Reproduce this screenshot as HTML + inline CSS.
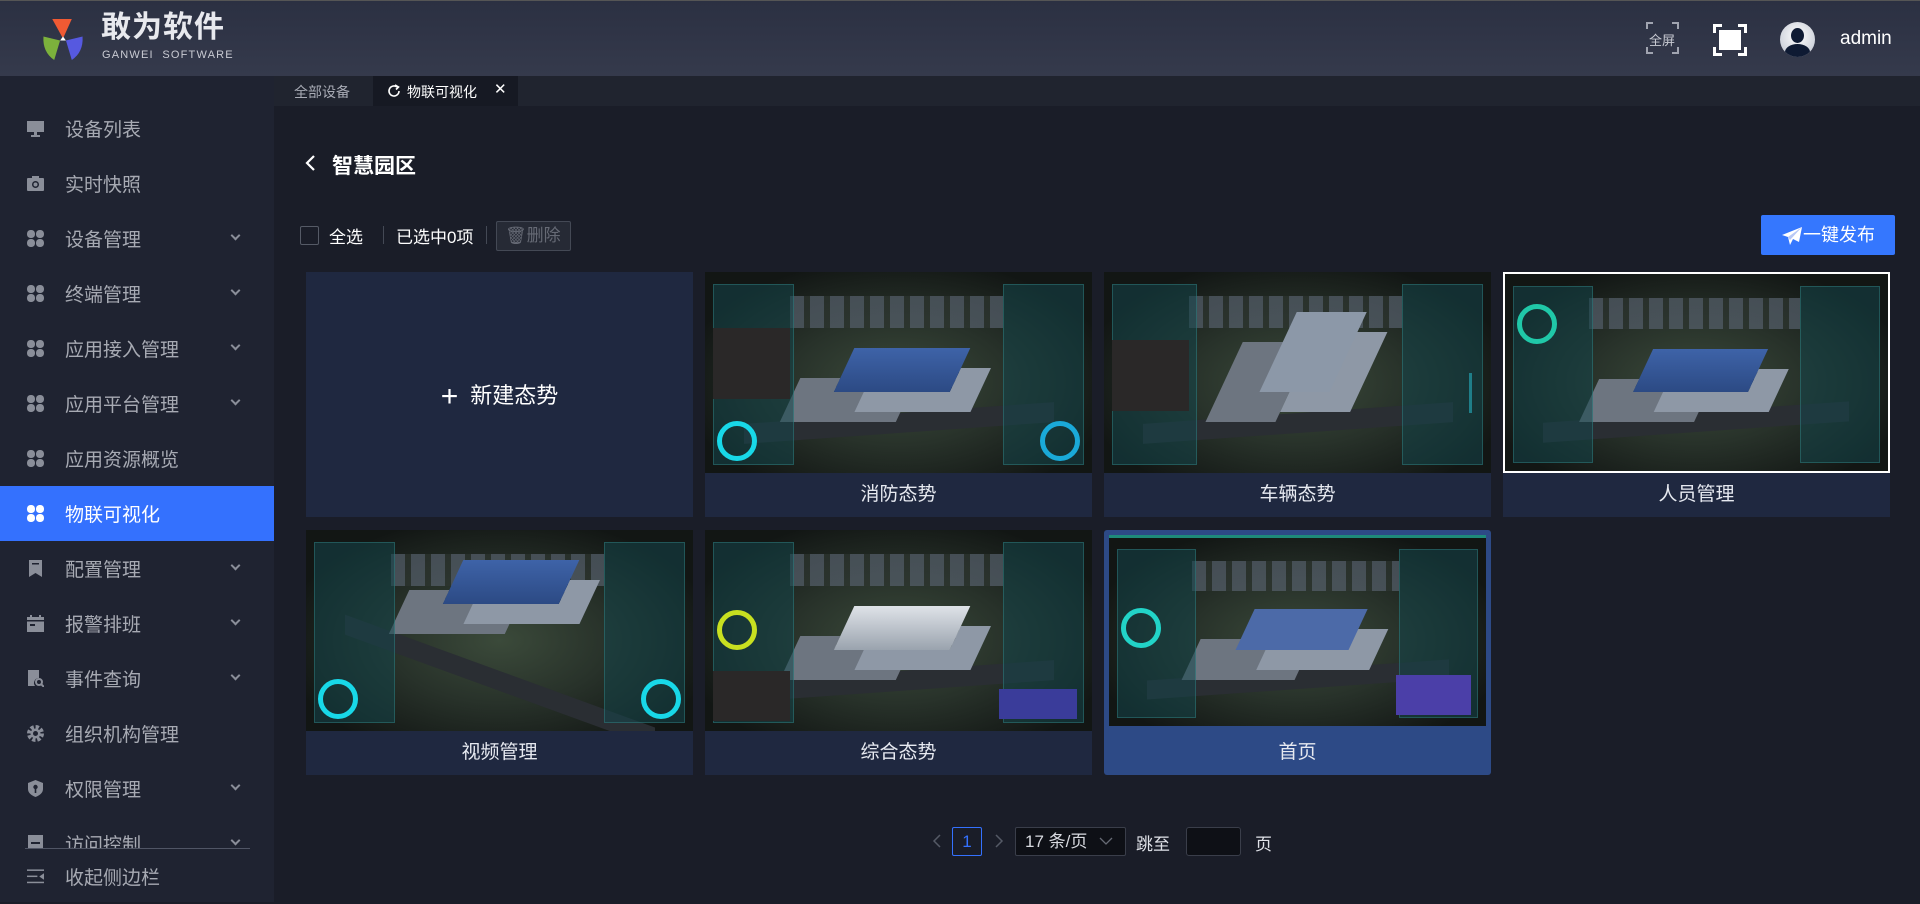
<!DOCTYPE html>
<html><head><meta charset="utf-8"><style>
*{margin:0;padding:0;box-sizing:border-box}
body{width:1920px;height:902px;overflow:hidden;background:#1a1d28;font-family:"Liberation Sans","Noto Sans CJK SC",sans-serif;position:relative;color:#fff}
.hdr{position:absolute;left:0;top:0;width:1920px;height:76px;background:linear-gradient(180deg,#2b3042,#353a4c);border-top:1px solid #555}
.side{position:absolute;left:0;top:76px;width:274px;height:826px;background:#1f2331}
.item{position:absolute;left:0;width:274px;height:55px;display:flex;align-items:center;font-size:19px;color:#a7aab3}
.item .ic{position:absolute;left:27px;width:17px;height:17px}
.item .tx{position:absolute;left:65px}
.item .ar{position:absolute;left:232px;width:7px;height:7px;border-right:2px solid #8a8e99;border-bottom:2px solid #8a8e99;transform:rotate(45deg);top:21px}
.item.act{background:#3471fe;color:#fff}
.clover{display:grid;grid-template-columns:8px 8px;gap:1px}
.clover i{width:8px;height:8px;border-radius:45%;background:#8a8e99;display:block}
.tabs{position:absolute;left:274px;top:76px;width:1646px;height:30px;background:#20242f}
.main{position:absolute;left:274px;top:106px;width:1646px;height:796px;background:#1a1d28}
.card{position:absolute;width:387px;height:245px;background:#1f2840}
.card .lb{position:absolute;left:0;right:0;bottom:0;height:44px;line-height:44px;text-align:center;font-size:19px;color:#e6e9f0}
.th{position:absolute;left:0;top:0;right:0;height:201px;overflow:hidden;background:
radial-gradient(ellipse at 50% 55%,#3b4a3a 0,#28322a 40%,#121614 80%);}
.th .bld{position:absolute;left:36%;top:38%;width:30%;height:22%;background:linear-gradient(#3e63a8,#2c4a84);transform:skewX(-25deg);box-shadow:30px 20px 0 #8e98a6,-40px 30px 0 #6d7580}
.th .bld2{position:absolute;left:22%;top:12%;width:55%;height:16%;background:repeating-linear-gradient(90deg,#56606c 0 14px,#2d3530 14px 20px);opacity:.7}
.th .road{position:absolute;left:10%;top:70%;width:80%;height:10%;background:#2a2e33;transform:skewY(-4deg)}
.th .pl,.th .pr{position:absolute;top:6%;bottom:4%;width:21%;background:rgba(20,70,75,.55);border:1px solid rgba(60,160,160,.35)}
.th .pl{left:2%}.th .pr{right:2%}
.th .ring{position:absolute;width:40px;height:40px;border-radius:50%;border:5px solid #18d8e8;bottom:12px}
.th .vid{position:absolute;left:2%;top:28%;width:20%;height:35%;background:#2a2828}
.tb{position:absolute;height:16px;background:rgba(40,200,220,.5)}
.cn{position:absolute;width:7px;height:7px;border-color:#a0a4b0;border-style:solid;border-width:0}
</style></head><body>
<div class="hdr">
 <svg style="position:absolute;left:40px;top:16px" width="46" height="44" viewBox="0 0 42 45">
  <path d="M10 2 L30 2 L21 22 Z" fill="#f05a33"/>
  <path d="M1 20 L18 24 L12 44 Q0 36 1 20Z" fill="#7cb13c"/>
  <path d="M41 20 L24 24 L30 44 Q42 36 41 20Z" fill="#5659e0"/>
  <path d="M18 24 L24 24 L21 20Z" fill="#fff"/>
 </svg>
 <div style="position:absolute;left:101px;top:8px;font-size:30px;line-height:38px;font-weight:bold;color:#e8e9ee;letter-spacing:1px">敢为软件</div>
 <div style="position:absolute;left:102px;top:48px;font-size:11px;line-height:13px;color:#c9cbd3;letter-spacing:1.2px">GANWEI&nbsp; SOFTWARE</div>
 <div class="cn" style="left:1646px;top:21px;border-left-width:2px;border-top-width:2px"></div>
 <div class="cn" style="left:1672px;top:21px;border-right-width:2px;border-top-width:2px"></div>
 <div class="cn" style="left:1646px;top:46px;border-left-width:2px;border-bottom-width:2px"></div>
 <div class="cn" style="left:1672px;top:46px;border-right-width:2px;border-bottom-width:2px"></div>
 <div style="position:absolute;left:1649px;top:29px;font-size:13px;color:#c8cad2">全屏</div>
 <div class="cn" style="left:1713px;top:23px;width:9px;height:9px;border-color:#fff;border-left-width:3px;border-top-width:3px"></div>
 <div class="cn" style="left:1738px;top:23px;width:9px;height:9px;border-color:#fff;border-right-width:3px;border-top-width:3px"></div>
 <div class="cn" style="left:1713px;top:46px;width:9px;height:9px;border-color:#fff;border-left-width:3px;border-bottom-width:3px"></div>
 <div class="cn" style="left:1738px;top:46px;width:9px;height:9px;border-color:#fff;border-right-width:3px;border-bottom-width:3px"></div>
 <div style="position:absolute;left:1719px;top:29px;width:22px;height:20px;background:#fff"></div>
 <div style="position:absolute;left:1780px;top:21px;width:35px;height:35px;border-radius:50%;background:radial-gradient(circle at 50% 40%,#fff,#b9bfcc);overflow:hidden"><div style="position:absolute;left:11px;top:6px;width:13px;height:15px;border-radius:50%;background:#0e1a33"></div><div style="position:absolute;left:5px;top:22px;width:25px;height:16px;border-radius:50% 50% 0 0;background:#0e1a33"></div></div>
 <div style="position:absolute;left:1840px;top:27px;font-size:19px;color:#fff">admin</div>
</div>
<div class="side">
 <div class="item" style="top:25px"><svg class="ic" viewBox="0 0 17 17"><rect x="0" y="1" width="17" height="11" fill="#8a8e99"/><rect x="7" y="12" width="3" height="3" fill="#8a8e99"/><rect x="4" y="15" width="9" height="2" fill="#8a8e99"/></svg><span class="tx">设备列表</span></div>
 <div class="item" style="top:80px"><svg class="ic" viewBox="0 0 17 17"><rect x="0" y="3" width="17" height="13" rx="1" fill="#8a8e99"/><rect x="5" y="1" width="7" height="3" fill="#8a8e99"/><circle cx="8.5" cy="9.5" r="3.5" fill="#1f2331"/><circle cx="8.5" cy="9.5" r="2" fill="#8a8e99"/></svg><span class="tx">实时快照</span></div>
 <div class="item" style="top:135px"><div class="ic clover"><i></i><i></i><i></i><i></i></div><span class="tx">设备管理</span><span class="ar"></span></div>
 <div class="item" style="top:190px"><div class="ic clover"><i></i><i></i><i></i><i></i></div><span class="tx">终端管理</span><span class="ar"></span></div>
 <div class="item" style="top:245px"><div class="ic clover"><i></i><i></i><i></i><i></i></div><span class="tx">应用接入管理</span><span class="ar"></span></div>
 <div class="item" style="top:300px"><div class="ic clover"><i></i><i></i><i></i><i></i></div><span class="tx">应用平台管理</span><span class="ar"></span></div>
 <div class="item" style="top:355px"><div class="ic clover"><i></i><i></i><i></i><i></i></div><span class="tx">应用资源概览</span></div>
 <div class="item act" style="top:410px"><div class="ic clover"><i style="background:#fff"></i><i style="background:#fff"></i><i style="background:#fff"></i><i style="background:#fff"></i></div><span class="tx">物联可视化</span></div>
 <div class="item" style="top:465px"><svg class="ic" viewBox="0 0 17 17"><path d="M2 0H15V17L8.5 13L2 17Z" fill="#8a8e99"/><rect x="5" y="3" width="7" height="1.5" fill="#1f2331"/></svg><span class="tx">配置管理</span><span class="ar"></span></div>
 <div class="item" style="top:520px"><svg class="ic" viewBox="0 0 17 17"><rect x="0" y="2" width="17" height="15" fill="#8a8e99"/><rect x="3" y="0" width="2" height="4" fill="#8a8e99"/><rect x="12" y="0" width="2" height="4" fill="#8a8e99"/><rect x="0" y="5" width="17" height="1.5" fill="#1f2331"/><rect x="3" y="9" width="5" height="2" fill="#1f2331"/></svg><span class="tx">报警排班</span><span class="ar"></span></div>
 <div class="item" style="top:575px"><svg class="ic" viewBox="0 0 17 17"><path d="M1 0H12V8A5 5 0 0 0 8 16H1Z" fill="#8a8e99"/><circle cx="12" cy="12" r="3" fill="none" stroke="#8a8e99" stroke-width="2"/><path d="M14 14L17 17" stroke="#8a8e99" stroke-width="2"/></svg><span class="tx">事件查询</span><span class="ar"></span></div>
 <div class="item" style="top:630px"><svg class="ic" viewBox="0 0 17 17"><circle cx="8.5" cy="8.5" r="6" fill="none" stroke="#8a8e99" stroke-width="5" stroke-dasharray="3 1.7"/><circle cx="8.5" cy="8.5" r="5" fill="#8a8e99"/><circle cx="8.5" cy="8.5" r="2.5" fill="#1f2331"/></svg><span class="tx">组织机构管理</span></div>
 <div class="item" style="top:685px"><svg class="ic" viewBox="0 0 17 17"><path d="M8.5 0L16 3V9Q16 14 8.5 17Q1 14 1 9V3Z" fill="#8a8e99"/><circle cx="8.5" cy="7" r="2.2" fill="#1f2331"/><rect x="7.7" y="8" width="1.6" height="5" fill="#1f2331"/></svg><span class="tx">权限管理</span><span class="ar"></span></div>
 <div style="position:absolute;top:740px;left:0;width:274px;height:32px;overflow:hidden"><div class="item" style="top:0"><svg class="ic" viewBox="0 0 17 17"><rect x="1" y="0" width="15" height="17" fill="#8a8e99"/><rect x="4" y="7" width="9" height="2" fill="#1f2331"/></svg><span class="tx">访问控制</span><span class="ar"></span></div></div>
 <div style="position:absolute;top:772px;left:25px;width:225px;height:1px;background:#505565"></div>
 <div class="item" style="top:773px"><svg class="ic" viewBox="0 0 18 17"><rect x="0" y="1" width="18" height="1.6" fill="#8a8e99"/><rect x="0" y="7.5" width="11" height="1.6" fill="#8a8e99"/><rect x="0" y="14" width="18" height="1.6" fill="#8a8e99"/><path d="M18 5V12L13 8.5Z" fill="#8a8e99"/></svg><span class="tx">收起侧边栏</span></div>
</div>
<div class="tabs">
 <div style="position:absolute;left:20px;top:6px;font-size:14px;color:#a8abb5">全部设备</div>
 <div style="position:absolute;left:99px;top:0;width:145px;height:30px;background:#161923"></div>
 <svg style="position:absolute;left:113px;top:8px" width="14" height="14" viewBox="0 0 14 14"><path d="M12 7A5 5 0 1 1 10 3" fill="none" stroke="#fff" stroke-width="1.6"/><path d="M8 1L11.5 3L9 5.5" fill="none" stroke="#fff" stroke-width="1.6"/></svg>
 <div style="position:absolute;left:133px;top:6px;font-size:14px;color:#fff">物联可视化</div>
 <div style="position:absolute;left:220px;top:4px;font-size:15px;color:#fff">✕</div>
</div>
<div class="main">
 <svg style="position:absolute;left:30px;top:48px" width="14" height="18" viewBox="0 0 14 18"><path d="M10 2L3 9L10 16" fill="none" stroke="#fff" stroke-width="2.2"/></svg>
 <div style="position:absolute;left:58px;top:44px;font-size:21px;font-weight:bold">智慧园区</div>
 <div style="position:absolute;left:26px;top:120px;width:19px;height:19px;border:1px solid #555a66;border-radius:2px"></div>
 <div style="position:absolute;left:55px;top:117px;font-size:17px">全选</div>
 <div style="position:absolute;left:109px;top:120px;width:1px;height:18px;background:#444955"></div>
 <div style="position:absolute;left:122px;top:117px;font-size:17px">已选中0项</div>
 <div style="position:absolute;left:212px;top:120px;width:1px;height:18px;background:#444955"></div>
 <div style="position:absolute;left:222px;top:115px;width:75px;height:30px;border:1px solid #444955;border-radius:2px;background:#262a35;font-size:17px;color:#666a75;padding-left:8px;line-height:28px">🗑删除</div>
 <div style="position:absolute;left:1487px;top:109px;width:134px;height:40px;background:#3577fe;border-radius:2px;font-size:18px;line-height:40px;padding-left:42px">一键发布</div>
 <svg style="position:absolute;left:1508px;top:121px" width="20" height="18" viewBox="0 0 20 18"><path d="M20 0L0 8L6 10L8 18L11 12L17 15Z" fill="#fff"/><path d="M6 10L20 0L8 13Z" fill="#b8c8f5"/></svg>

 <div class="card" style="left:32px;top:166px;background:#1f2840"><div style="position:absolute;left:0;right:0;top:106px;text-align:center;font-size:22px"><span style="font-size:30px;vertical-align:-3px;margin-right:12px">+</span>新建态势</div></div>

 <div class="card" style="left:431px;top:166px"><div class="th"><div class="bld2"></div><div class="road"></div><div class="bld"></div><div class="pl"></div><div class="vid"></div><div class="pr"></div><div class="ring" style="left:12px"></div><div class="ring" style="right:12px;border-color:#1aa9d8"></div></div><div class="lb">消防态势</div></div>
 <div class="card" style="left:830px;top:166px"><div class="th"><div class="bld2"></div><div class="road"></div><div class="bld" style="left:45%;top:20%;width:18%;height:40%;background:#8c98a8"></div><div class="pl" style="width:22%"></div><div class="vid" style="top:34%"></div><div class="pr"></div><div class="tb" style="right:5%;bottom:30%;width:3px;height:40px"></div></div><div class="lb">车辆态势</div></div>
 <div class="card" style="left:1229px;top:166px"><div class="th" style="border:2px solid #fff"><div class="bld2"></div><div class="road"></div><div class="bld"></div><div class="pl"></div><div class="pr"></div><div class="ring" style="left:12px;top:30px;border-color:#20c8a8"></div></div><div class="lb">人员管理</div></div>

 <div class="card" style="left:32px;top:424px"><div class="th" style="height:201px"><div class="bld2"></div><div class="road" style="transform:skewY(20deg)"></div><div class="bld" style="left:38%;top:15%"></div><div class="pl"></div><div class="pr"></div><div class="ring" style="left:12px"></div><div class="ring" style="right:12px"></div></div><div class="lb">视频管理</div></div>
 <div class="card" style="left:431px;top:424px"><div class="th"><div class="bld2"></div><div class="road"></div><div class="bld" style="background:linear-gradient(#dfe3e8,#9aa3ae)"></div><div class="pl"></div><div class="vid" style="top:70%;height:25%"></div><div class="pr"></div><div class="ring" style="left:12px;top:80px;border-color:#c8e020"></div><div class="tb" style="right:4%;bottom:6%;width:20%;height:30px;background:#3a3c9a"></div></div><div class="lb">综合态势</div></div>
 <div class="card" style="left:830px;top:424px;background:#2d4a86;border-radius:3px"><div class="th" style="left:5px;right:5px;top:5px;height:191px;border-top:3px solid #1e8a7a"><div class="bld2"></div><div class="road"></div><div class="bld" style="background:#4c6aa8"></div><div class="pl"></div><div class="pr"></div><div class="ring" style="left:12px;top:70px;border-color:#22d4c8"></div><div class="tb" style="right:4%;bottom:6%;width:20%;height:40px;background:#4b3fa8"></div></div><div class="lb">首页</div></div>

 <svg style="position:absolute;left:658px;top:728px" width="10" height="14" viewBox="0 0 10 14"><path d="M8 1L2 7L8 13" fill="none" stroke="#555a66" stroke-width="1.5"/></svg>
 <div style="position:absolute;left:678px;top:721px;width:30px;height:29px;border:1px solid #3471fe;border-radius:2px;color:#3471fe;font-size:17px;text-align:center;line-height:27px">1</div>
 <svg style="position:absolute;left:720px;top:728px" width="10" height="14" viewBox="0 0 10 14"><path d="M2 1L8 7L2 13" fill="none" stroke="#555a66" stroke-width="1.5"/></svg>
 <div style="position:absolute;left:741px;top:721px;width:111px;height:29px;border:1px solid #3a3e4a;border-radius:2px;background:#0e1016;font-size:17px;line-height:27px;padding-left:9px;color:#d8dae0">17 条/页</div>
 <svg style="position:absolute;left:825px;top:731px" width="14" height="9" viewBox="0 0 14 9"><path d="M1 1L7 7L13 1" fill="none" stroke="#666a75" stroke-width="1.3"/></svg>
 <div style="position:absolute;left:862px;top:724px;font-size:17px;color:#e0e2e8">跳至</div>
 <div style="position:absolute;left:912px;top:721px;width:55px;height:29px;border:1px solid #3a3e4a;border-radius:3px;background:#0e1016"></div>
 <div style="position:absolute;left:981px;top:724px;font-size:17px;color:#e0e2e8">页</div>
</div>
</body></html>
